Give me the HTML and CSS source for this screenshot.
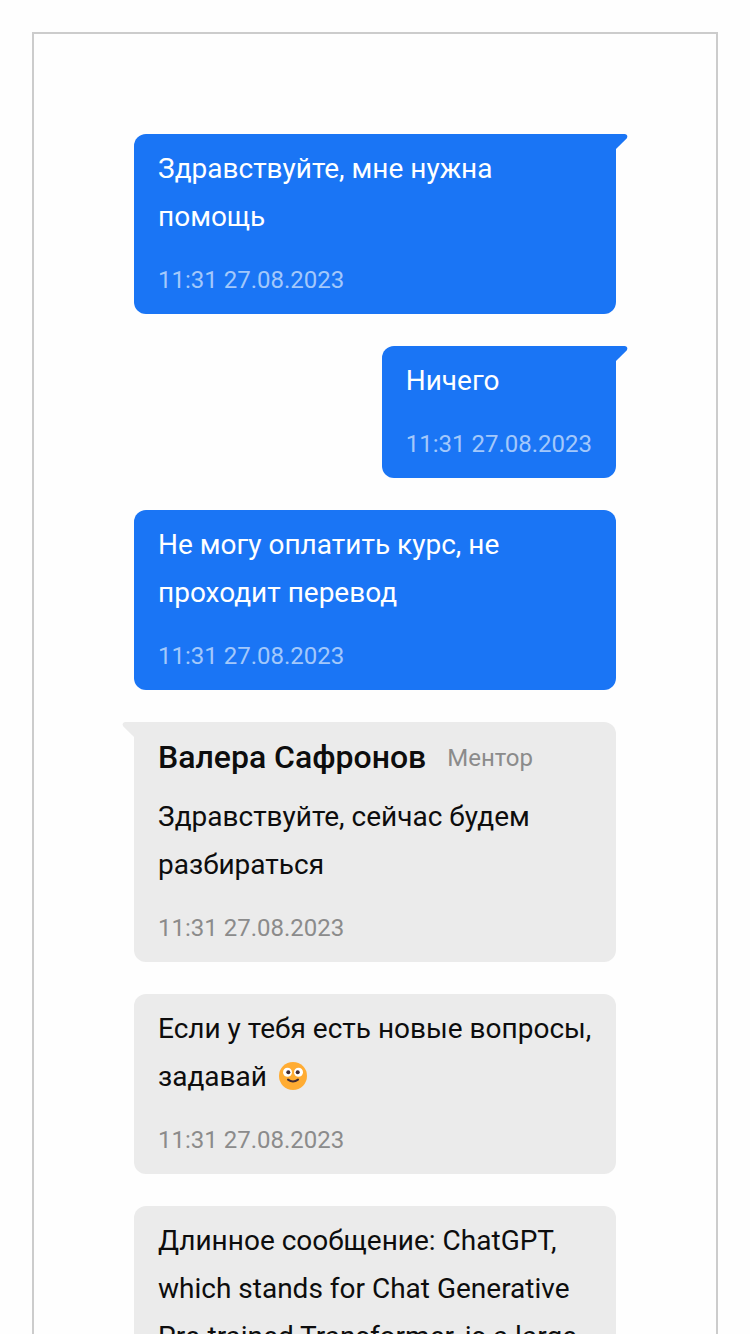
FILE: index.html
```html
<!DOCTYPE html>
<html lang="ru">
<head>
<meta charset="utf-8">
<title>Чат</title>
<link rel="stylesheet" href="styles.css">
</head>
<body>
<main class="chat">
  <article class="message message--own message--tail">
    <svg class="tail" viewBox="0 0 12 16"><path d="M0 0H8.500C11.200 0 12.200 2.600 10.400 4.800L0 15Z"/></svg>
    <p class="text">Здравствуйте, мне нужна помощь</p>
    <time class="time">11:31 27.08.2023</time>
  </article>
  <article class="message message--own message--tail">
    <svg class="tail" viewBox="0 0 12 16"><path d="M0 0H8.500C11.200 0 12.200 2.600 10.400 4.800L0 15Z"/></svg>
    <p class="text">Ничего</p>
    <time class="time">11:31 27.08.2023</time>
  </article>
  <article class="message message--own">
    <p class="text">Не могу оплатить курс, не проходит перевод</p>
    <time class="time">11:31 27.08.2023</time>
  </article>
  <article class="message message--mentor message--tail">
    <svg class="tail" viewBox="0 0 12 16"><path d="M0 0H8.500C11.200 0 12.200 2.600 10.400 4.800L0 15Z"/></svg>
    <header class="author"><span class="name">Валера Сафронов</span><span class="role">Ментор</span></header>
    <p class="text">Здравствуйте, сейчас будем разбираться</p>
    <time class="time">11:31 27.08.2023</time>
  </article>
  <article class="message message--mentor">
    <p class="text">Если у тебя есть новые вопросы, задавай <svg class="emoji" viewBox="0 0 28 28"><circle cx="14" cy="14" r="14" fill="#ffac33"/><circle cx="8.500" cy="10.200" r="4.500" fill="#fff"/><circle cx="19.500" cy="10.200" r="4.500" fill="#fff"/><circle cx="9.300" cy="10.200" r="2" fill="#402a32"/><circle cx="18.700" cy="10.200" r="2" fill="#402a32"/><path d="M9 17.600Q14 21.300 19 17.600" fill="none" stroke="#402a32" stroke-width="2" stroke-linecap="round"/></svg></p>
    <time class="time">11:31 27.08.2023</time>
  </article>
  <article class="message message--mentor">
    <p class="text">Длинное сообщение: ChatGPT, which stands for Chat Generative Pre-trained Transformer, is a large language model-based chatbot</p>
    <time class="time">11:31 27.08.2023</time>
  </article>
</main>
</body>
</html>
```
FILE: styles.css
```css
* { box-sizing: border-box; }
html { height: 100%; overflow: hidden; }
body {
  height: 100%;
  margin: 0;
  padding: 32px 32px 0;
  overflow: hidden;
  background: #fefefe;
  font-family: Roboto, "Noto Sans", sans-serif;
}
.chat {
  display: flex;
  flex-direction: column;
  align-items: flex-start;
  gap: 32px;
  padding: 100px;
  border: 2px solid #ccc;
}
.message {
  position: relative;
  display: flex;
  flex-direction: column;
  max-width: 100%;
  padding: 11px 24px 10px;
  border-radius: 12px;
}
.message--own {
  align-self: flex-end;
  background: #1a75f5;
  color: #fff;
}
.message--mentor {
  background: #ebebeb;
  color: #0d0d0d;
}
.message--own.message--tail { border-top-right-radius: 0; }
.message--mentor.message--tail { border-top-left-radius: 0; }
.tail {
  position: absolute;
  top: 0;
  left: 100%;
  width: 12px;
  height: 16px;
  fill: #1a75f5;
}
.message--mentor .tail {
  right: 100%;
  left: auto;
  fill: #ebebeb;
  transform: scaleX(-1);
}
.author {
  display: flex;
  align-items: flex-start;
  gap: 21px;
  height: 60px;
  line-height: 48px;
}
.name { font-size: 32px; font-weight: 500; }
.role { font-size: 24px; line-height: 50px; color: #8b8b8b; }
.text {
  margin: 0 0 15px;
  font-size: 28px;
  line-height: 48px;
}
.emoji {
  width: 28px;
  height: 28px;
  margin-left: 5px;
  vertical-align: -4px;
}
.time {
  font-size: 24px;
  line-height: 48px;
  color: #8b8b8b;
}
.message--own .time { color: #a3c8fb; }
```
